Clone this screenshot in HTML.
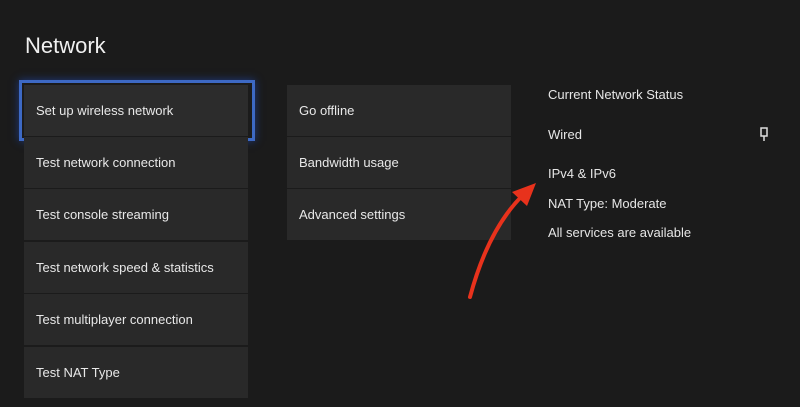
<!DOCTYPE html>
<html><head><style>
body{margin:0;width:800px;height:407px;background:#1b1b1b;font-family:"Liberation Sans",sans-serif;color:#e8e8e8;position:relative;overflow:hidden}
h1{position:absolute;left:25px;top:33px;margin:0;font-weight:normal;font-size:22px;color:#f0f0f0}
.t{position:absolute;background:#292929;font-size:13px;box-sizing:border-box;padding-left:12px;line-height:51px;height:51px;width:224px}
.s{position:absolute;left:548px;font-size:13px;color:#e6e6e6}
</style></head><body>
<h1>Network</h1>
<div class="t" style="left:24px;top:85px;background:#2c2c2c">Set up wireless network</div>
<div style="position:absolute;left:19px;top:80px;width:230px;height:55px;border:3px solid #3d69c4;box-shadow:0 0 8px #1e3a80"></div>
<div class="t" style="left:24px;top:137px">Test network connection</div>
<div class="t" style="left:24px;top:189px">Test console streaming</div>
<div class="t" style="left:24px;top:242px">Test network speed &amp; statistics</div>
<div class="t" style="left:24px;top:294px">Test multiplayer connection</div>
<div class="t" style="left:24px;top:347px">Test NAT Type</div>
<div class="t" style="left:287px;top:85px">Go offline</div>
<div class="t" style="left:287px;top:137px">Bandwidth usage</div>
<div class="t" style="left:287px;top:189px">Advanced settings</div>
<div class="s" style="top:87px">Current Network Status</div>
<div class="s" style="top:127px">Wired</div>
<div class="s" style="top:166px">IPv4 &amp; IPv6</div>
<div class="s" style="top:196px">NAT Type: Moderate</div>
<div class="s" style="top:225px">All services are available</div>
<svg style="position:absolute;left:0;top:0" width="800" height="407">
<rect x="761" y="128" width="6" height="8" fill="none" stroke="#ddd" stroke-width="1.5"/>
<line x1="764" y1="136" x2="764" y2="141" stroke="#ddd" stroke-width="1.5"/>
<path d="M470 297 Q488 230 522 196" fill="none" stroke="#e8321c" stroke-width="4" stroke-linecap="round"/>
<path d="M536 183 L512 192 L527 206 Z" fill="#e8321c"/>
</svg>
</body></html>
